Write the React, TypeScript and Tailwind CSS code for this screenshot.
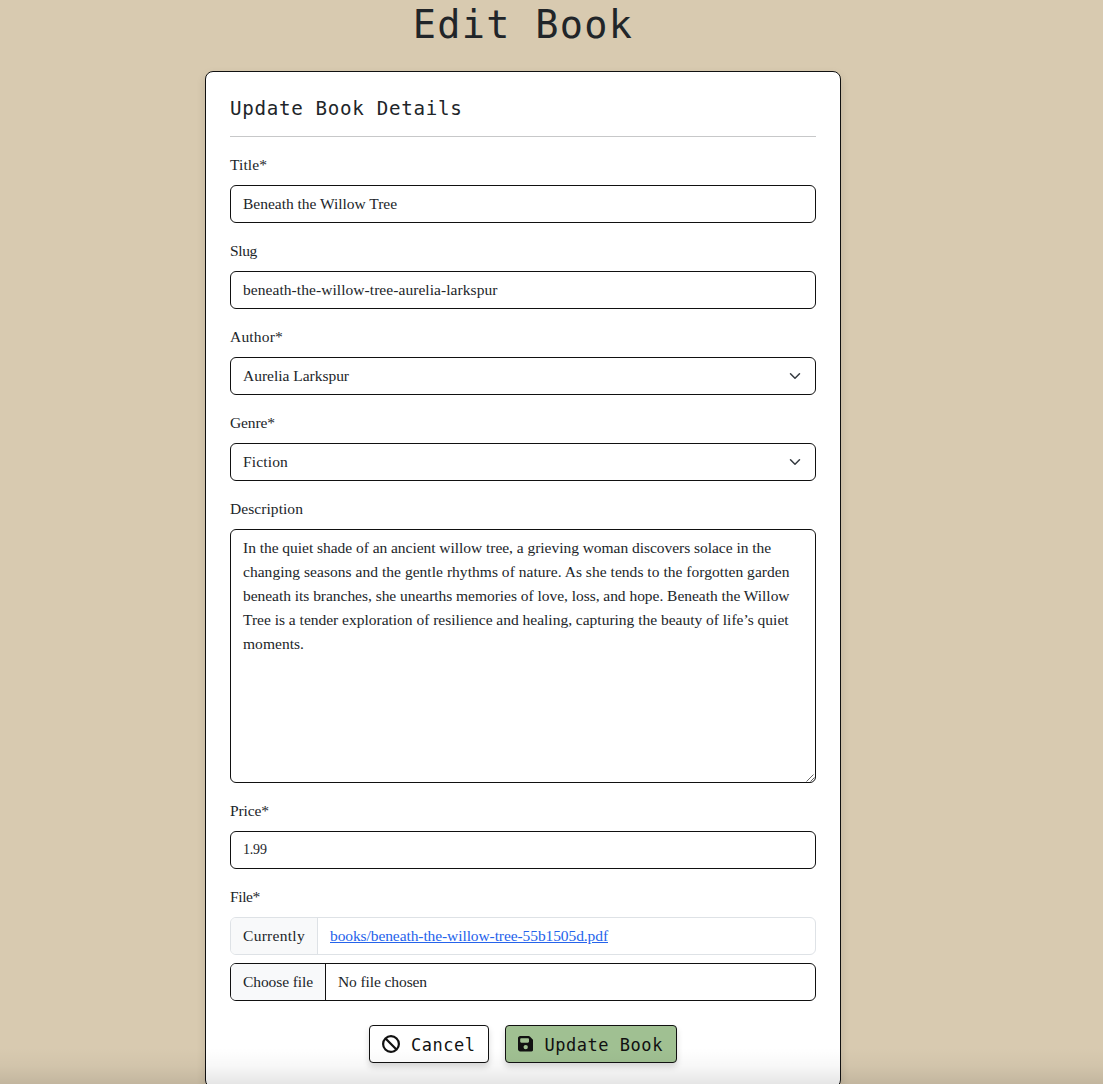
import type { ReactNode } from "react";
import { FaBan, FaFloppyDisk } from "react-icons/fa6";

function Field({ label, tracking, children }: { label: string; tracking: string; children: ReactNode }) {
  return (
    <div className="mb-4">
      <label className={"mb-2 block " + tracking}>{label}</label>
      {children}
    </div>
  );
}

function TextBox({ value, tracking }: { value: string; tracking: string }) {
  return (
    <div className="flex h-[38px] items-center rounded-md border border-[#111] bg-white px-3">
      <span className={tracking}>{value}</span>
    </div>
  );
}

function SelectBox({ value, tracking }: { value: string; tracking: string }) {
  return (
    <div className="flex h-[38px] items-center justify-between rounded-md border border-[#111] bg-white pl-3 pr-3.5">
      <span className={tracking}>{value}</span>
      <svg className="size-3" viewBox="0 0 16 16" fill="none">
        <path d="m2 5 6 6 6-6" stroke="#343a40" strokeWidth="2" strokeLinecap="round" strokeLinejoin="round" />
      </svg>
    </div>
  );
}

const description = [
  { text: "In the quiet shade of an ancient willow tree, a grieving woman discovers solace in the", tracking: "tracking-[-0.036px]" },
  { text: "changing seasons and the gentle rhythms of nature. As she tends to the forgotten garden", tracking: "tracking-[0.036px]" },
  { text: "beneath its branches, she unearths memories of love, loss, and hope. Beneath the Willow", tracking: "tracking-[-0.036px]" },
  { text: "Tree is a tender exploration of resilience and healing, capturing the beauty of life’s quiet", tracking: "tracking-[-0.01px]" },
  { text: "moments.", tracking: "tracking-[0.037px]" },
];

export default function App() {
  return (
    <div className="relative h-[1084px] overflow-hidden bg-[#d8cab0] font-['Liberation_Serif',serif] text-[15.5px] leading-6 text-[#212529]">
      <h1 className="ml-[205px] w-[636px] pt-px text-center font-['DejaVu_Sans_Mono',monospace] text-[38.5px] leading-[48px] tracking-[1.3px]">
        Edit Book
      </h1>
      <main className="ml-[205px] mt-[22px] w-[636px] rounded-lg border border-[#111] bg-white p-6 shadow-[0_4px_10px_rgba(0,0,0,0.12)]">
        <h2 className="pt-px font-['DejaVu_Sans_Mono',monospace] text-[19.2px] leading-6 tracking-[0.68px]">Update Book Details</h2>
        <hr className="mb-4 mt-[15px] border-[#c7c8c9]" />

        <Field label="Title*" tracking="tracking-[0.088px]">
          <TextBox value="Beneath the Willow Tree" tracking="tracking-[-0.02px]" />
        </Field>
        <Field label="Slug" tracking="tracking-[-0.357px]">
          <TextBox value="beneath-the-willow-tree-aurelia-larkspur" tracking="tracking-[0.058px]" />
        </Field>
        <Field label="Author*" tracking="tracking-[0.191px]">
          <SelectBox value="Aurelia Larkspur" tracking="tracking-[-0.019px]" />
        </Field>
        <Field label="Genre*" tracking="tracking-[-0.102px]">
          <SelectBox value="Fiction" tracking="tracking-[0.154px]" />
        </Field>
        <Field label="Description" tracking="tracking-[0.062px]">
          <div className="relative h-[254px] rounded-md border border-[#111] bg-white px-3 py-1.5">
            {description.map((line) => (
              <p key={line.text} className={"whitespace-nowrap " + line.tracking}>
                {line.text}
              </p>
            ))}
            <svg className="absolute bottom-0 right-0 size-[9px]" viewBox="0 0 9 9" fill="none" stroke="#555" strokeWidth="0.9">
              <path d="M0.5 8.5 7.5 1.5M4.5 8.5 8.5 4.5" />
            </svg>
          </div>
        </Field>
        <Field label="Price*" tracking="tracking-[-0.1px]">
          <div className="flex h-[38px] items-center rounded-md border border-[#111] bg-white px-3">
            <span className="text-[14px] tracking-[-0.2px]">1.99</span>
          </div>
        </Field>
        <Field label="File*" tracking="tracking-[-0.373px]">
          <div className="mb-2 flex h-[38px] items-stretch overflow-hidden rounded-md border border-[#dee2e6]">
            <span className="flex w-[87px] items-center border-r border-[#dee2e6] bg-[#f8f9fa] pl-3 tracking-[0.288px]">Currently</span>
            <span className="flex items-center pl-3">
              <a href="#" className="tracking-[-0.094px] text-[#2563eb] underline">books/beneath-the-willow-tree-55b1505d.pdf</a>
            </span>
          </div>
          <div className="flex h-[38px] items-stretch overflow-hidden rounded-md border border-[#111]">
            <span className="flex w-[95px] items-center border-r border-[#111] bg-[#f8f9fa] pl-3 tracking-[-0.094px]">Choose file</span>
            <span className="flex items-center pl-3 tracking-[-0.099px]">No file chosen</span>
          </div>
        </Field>

        <div className="mt-6 flex justify-center gap-4 font-['DejaVu_Sans_Mono',monospace] text-[17px] tracking-[0.54px] text-[#111]">
          <button className="flex h-[38px] w-[120px] items-center rounded border border-[#111] bg-white pl-3 shadow-[0_4px_6px_rgba(0,0,0,0.15)]">
            <FaBan className="mr-[11px] size-[18px] shrink-0" />
            <span className="pt-0.5">Cancel</span>
          </button>
          <button className="flex h-[38px] w-[172px] items-center whitespace-nowrap rounded border border-[#111] bg-[#a0c092] pl-3 shadow-[0_4px_6px_rgba(0,0,0,0.15)]">
            <FaFloppyDisk className="mr-[11px] h-[17.6px] w-[15.4px] shrink-0" />
            <span className="pt-0.5">Update Book</span>
          </button>
        </div>
      </main>
      <div className="pointer-events-none absolute inset-x-0 bottom-0 h-9 bg-gradient-to-b from-transparent via-black/3 to-black/10" />
    </div>
  );
}
